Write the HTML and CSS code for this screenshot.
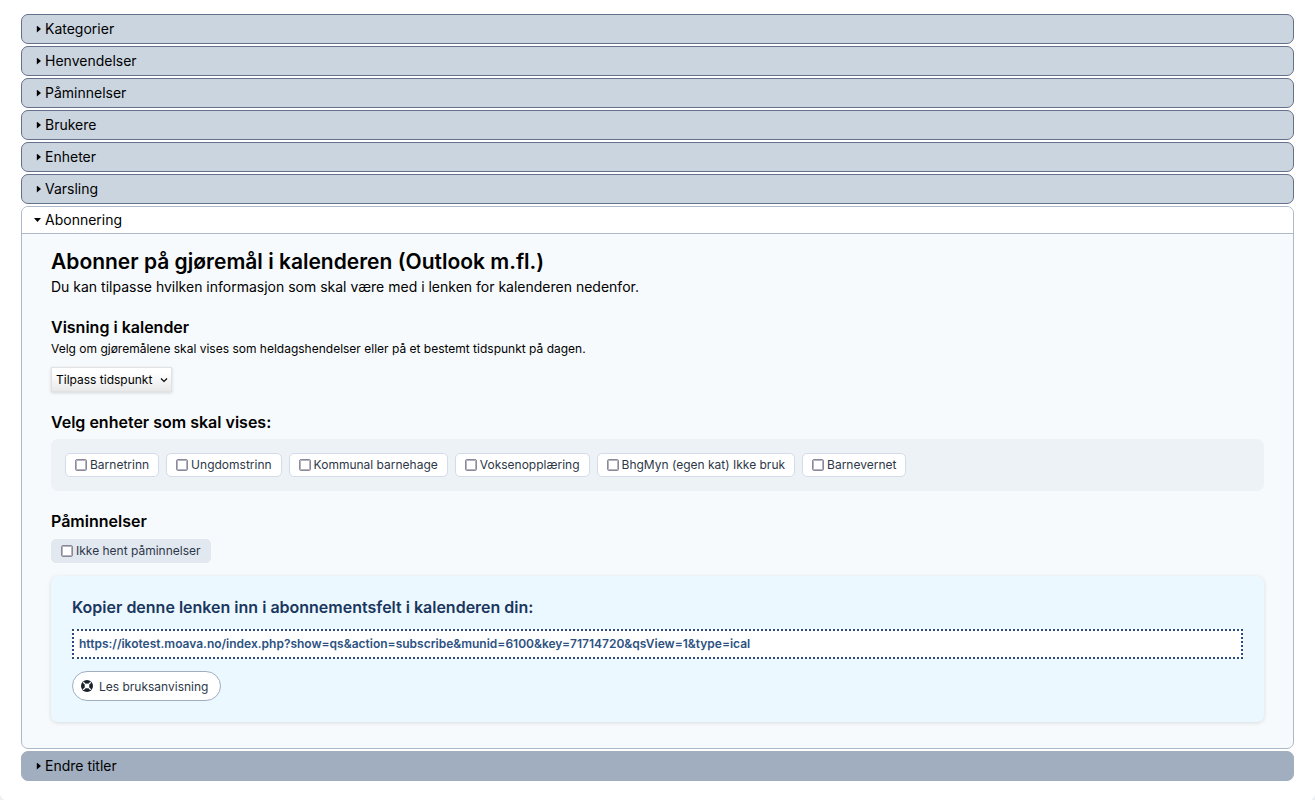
FILE: index.html
```html
<!DOCTYPE html>
<html lang="no">
<head>
<meta charset="utf-8">
<meta name="viewport" content="width=device-width, initial-scale=1">
<title>Innstillinger</title>
<link rel="stylesheet" href="styles.css">
</head>
<body>
<main class="page">
  <details class="section"><summary>Kategorier</summary></details>
  <details class="section"><summary>Henvendelser</summary></details>
  <details class="section"><summary>Påminnelser</summary></details>
  <details class="section"><summary>Brukere</summary></details>
  <details class="section"><summary>Enheter</summary></details>
  <details class="section"><summary>Varsling</summary></details>
  <details class="section" open>
    <summary>Abonnering</summary>
    <div class="content">
      <header class="intro">
        <h1>Abonner på gjøremål i kalenderen (Outlook m.fl.)</h1>
        <p>Du kan tilpasse hvilken informasjon som skal være med i lenken for kalenderen nedenfor.</p>
      </header>

      <section class="group">
        <h2><label for="display">Visning i kalender</label></h2>
        <p class="hint">Velg om gjøremålene skal vises som heldagshendelser eller på et bestemt tidspunkt på dagen.</p>
        <select class="picker" id="display">
          <option>Tilpass tidspunkt</option>
        </select>
      </section>

      <section class="group">
        <h2>Velg enheter som skal vises:</h2>
        <div class="units">
          <label class="chip"><input type="checkbox">Barnetrinn</label>
          <label class="chip"><input type="checkbox">Ungdomstrinn</label>
          <label class="chip"><input type="checkbox">Kommunal barnehage</label>
          <label class="chip"><input type="checkbox">Voksenopplæring</label>
          <label class="chip"><input type="checkbox">BhgMyn (egen kat) Ikke bruk</label>
          <label class="chip"><input type="checkbox">Barnevernet</label>
        </div>
      </section>

      <section class="group">
        <h2>Påminnelser</h2>
        <label class="chip chip-muted"><input type="checkbox">Ikke hent påminnelser</label>
      </section>

      <section class="share">
        <h2>Kopier denne lenken inn i abonnementsfelt i kalenderen din:</h2>
        <a class="feed" href="https://ikotest.moava.no/index.php?show=qs&amp;action=subscribe&amp;munid=6100&amp;key=71714720&amp;qsView=1&amp;type=ical">https://ikotest.moava.no/index.php?show=qs&amp;action=subscribe&amp;munid=6100&amp;key=71714720&amp;qsView=1&amp;type=ical</a>
        <button class="guide" type="button">
          <svg viewBox="0 0 24 24" width="12" height="12" aria-hidden="true">
            <circle cx="12" cy="12" r="12" fill="#1a202c"/>
            <path d="M4.500 4.500l15 15M19.500 4.500l-15 15" stroke="#fff" stroke-width="2.400"/>
            <circle cx="12" cy="12" r="4.800" fill="#fff"/>
          </svg>
          Les bruksanvisning
        </button>
      </section>
    </div>
  </details>
  <details class="section section-last"><summary>Endre titler</summary></details>
</main>
</body>
</html>
```

FILE: styles.css
```css
* {
  box-sizing: border-box;
}

body {
  margin: 0;
  background: #edf0f3;
  color: #000;
  font: 14px/20px Inter, sans-serif;
}

h1, h2, p {
  margin: 0;
}

.page {
  display: flex;
  flex-direction: column;
  gap: 2px;
  min-height: 100vh;
  padding: 14px 21px 20px;
  background: #fff;
  border-radius: 0 0 8px 8px;
}

.section {
  background: #cbd5e0;
  border: 1px solid #65718a;
  border-radius: 7px;
}

.section summary {
  display: flex;
  align-items: center;
  gap: 4px;
  height: 28px;
  padding-left: 12px;
  list-style: none;
  cursor: pointer;
}

.section summary::before {
  content: "";
  width: 7px;
  height: 7px;
  background: #000;
  clip-path: polygon(40% 0, 100% 50%, 40% 100%);
}

.section[open] {
  background: #f7fafc;
  border-color: #adb9cb;
}

.section[open] summary {
  height: 27px;
  background: #fff;
  border-bottom: 1px solid #adb9cb;
  border-radius: 6px 6px 0 0;
}

.section[open] summary::before {
  clip-path: polygon(0 22%, 100% 22%, 50% 78%);
}

.section-last {
  background: #a0aec0;
  border-color: #a0aec0;
}

.content {
  display: flex;
  flex-direction: column;
  gap: 20px;
  padding: 13px 29px 26px;
}

h1 {
  font-size: 21px;
  line-height: 30px;
  font-weight: 600;
}

h2 {
  font-size: 16px;
  line-height: 20px;
  font-weight: 600;
}

.group {
  display: flex;
  flex-direction: column;
  align-items: flex-start;
}

.hint {
  font-size: 12px;
  line-height: 24px;
}

.picker {
  height: 25px;
  margin-top: 6px;
  padding: 0 18px 0 4px;
  appearance: none;
  border: 1px solid #e2e2e2;
  border-radius: 0;
  background:
    url("data:image/svg+xml,%3Csvg xmlns='http://www.w3.org/2000/svg' viewBox='0 0 8 6'%3E%3Cpath d='M1 1.5l3 3 3-3' fill='none' stroke='%23000' stroke-width='1.1'/%3E%3C/svg%3E") right 3px center / 8px 6px no-repeat,
    linear-gradient(#fff 20%, #e9e9e9);
  box-shadow: 0 1px 3px rgba(0, 0, 0, 0.15);
  color: #000;
  font: 12px Inter, sans-serif;
}

.units {
  display: flex;
  flex-wrap: wrap;
  gap: 7px;
  width: 100%;
  margin-top: 7px;
  padding: 14px;
  background: #edf2f7;
  border-radius: 7px;
}

.chip {
  display: flex;
  align-items: center;
  gap: 3px;
  height: 24px;
  padding: 0 9px;
  background: #fff;
  border: 1px solid #d3dce8;
  border-radius: 5px;
  color: #2d3748;
  font-size: 12px;
}

.chip input {
  width: 12px;
  height: 12px;
  margin: 0;
  appearance: none;
  background: #fff;
  border: 1px solid #8b889a;
  border-radius: 2px;
  box-shadow: inset 0 0 0 1px #b5b3c0;
}

.chip input:checked {
  background: #2c5282;
}

.chip-muted {
  margin-top: 8px;
  background: #e2e8f0;
  border-color: #e2e8f0;
}

.share {
  display: flex;
  flex-direction: column;
  align-items: flex-start;
  margin-top: -7px;
  padding: 21px;
  background: #ebf8ff;
  border-radius: 7px;
  box-shadow: 0 1px 4px rgba(0, 0, 0, 0.12);
}

.share h2 {
  color: #1a365d;
}

.feed {
  align-self: stretch;
  margin: 12px 0;
  padding: 3px 5px;
  background: #fff;
  border: 2px dotted #2a4a7c;
  color: #2c5282;
  font-size: 12px;
  font-weight: 600;
  text-decoration: none;
  overflow-wrap: anywhere;
}

.guide {
  display: flex;
  align-items: center;
  gap: 6px;
  height: 30px;
  padding: 0 12px 0 8px;
  background: #fff;
  border: 1px solid #a0aec0;
  border-radius: 15px;
  color: #2d3748;
  font: 12px Inter, sans-serif;
}
```
